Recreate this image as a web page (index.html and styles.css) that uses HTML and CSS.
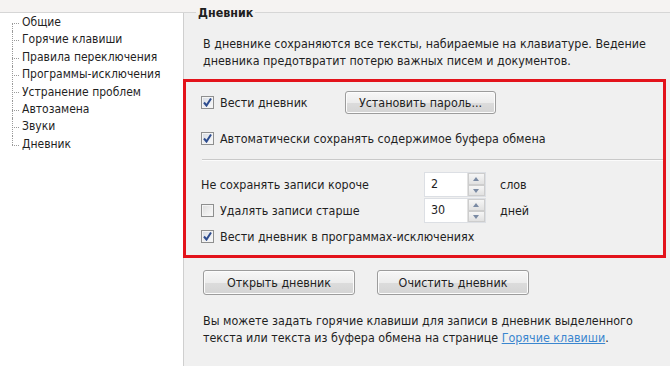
FILE: index.html
```html
<!DOCTYPE html>
<html lang="ru">
<head>
  <meta charset="UTF-8" />
  <meta name="viewport" content="width=device-width, initial-scale=1" />
  <title>Настройки - Дневник</title>
  <link rel="stylesheet" href="styles.css">
</head>
<body>
<div class="top-strip"></div>
<div class="window">
  <aside class="tree" aria-label="Разделы настроек">
    <ul>
      <li>Общие</li>
      <li>Горячие клавиши</li>
      <li>Правила переключения</li>
      <li>Программы-исключения</li>
      <li>Устранение проблем</li>
      <li>Автозамена</li>
      <li>Звуки</li>
      <li class="active">Дневник</li>
    </ul>
  </aside>
  <main class="pane">
    <h1 class="title"><span>Дневник</span></h1>
    <p class="intro">В дневнике сохраняются все тексты, набираемые на клавиатуре. Ведение дневника предотвратит потерю важных писем и документов.</p>

    <section class="highlight">
      <div class="row-first">
        <label class="check first-check"><span class="box checked"></span>Вести дневник</label>
        <button class="btn btn-pass">Установить пароль...</button>
      </div>
      <label class="check clip-check"><span class="box checked"></span>Автоматически сохранять содержимое буфера обмена</label>
      <hr class="sep">
      <div class="limits">
        <span class="limit-label">Не сохранять записи короче</span>
        <div class="spin">
          <span class="spin-value">2</span>
          <span class="spin-btns"><span class="up"></span><span class="down"></span></span>
        </div>
        <span class="unit">слов</span>

        <label class="check limit-label"><span class="box"></span>Удалять записи старше</label>
        <div class="spin">
          <span class="spin-value">30</span>
          <span class="spin-btns"><span class="up"></span><span class="down"></span></span>
        </div>
        <span class="unit">дней</span>
      </div>
      <label class="check excl-check"><span class="box checked"></span>Вести дневник в программах-исключениях</label>
    </section>

    <div class="actions">
      <button class="btn">Открыть дневник</button>
      <button class="btn">Очистить дневник</button>
    </div>
    <p class="note">Вы можете задать горячие клавиши для записи в дневник выделенного текста или текста из буфера обмена на странице <a href="#">Горячие клавиши</a>.</p>
  </main>
</div>
</body>
</html>
```

FILE: styles.css
```css
html, body {
  margin: 0;
  height: 100%;
  overflow: hidden;
}
body {
  font-family: 'DejaVu Sans Condensed', 'DejaVu Sans', sans-serif;
  font-size: 12.4px;
  color: #1f1f1f;
  background: #f0f0f0;
}
.top-strip {
  height: 12px;
  background: #f5f3f2;
}
.window {
  display: flex;
  height: 354px;
  border-top: 1px solid #d6d6d6;
}

/* left tree */
.tree {
  width: 183px;
  flex-shrink: 0;
  background: #fff;
  border-right: 1px solid #cfcfcf;
  font-size: 12px;
}
.tree ul {
  list-style: none;
  margin: 0;
  padding: 1px 0 0 12px;
}
.tree li {
  position: relative;
  line-height: 17.4px;
  padding-left: 10px;
  white-space: nowrap;
}
.tree li::before {
  content: '';
  position: absolute;
  left: 0;
  top: 50%;
  width: 7px;
  border-top: 1px dotted #9a9a9a;
}
.tree li::after {
  content: '';
  position: absolute;
  left: 0;
  top: 0;
  bottom: 0;
  border-left: 1px dotted #9a9a9a;
}
.tree li:first-child::after { top: 50%; }
.tree li:last-child::after { bottom: 50%; }

/* right pane */
.pane {
  flex: 1;
  padding: 0 4px 0 0;
}
.title {
  margin: -7px 0 0 12px;
  font-size: 12.4px;
  line-height: 14px;
  font-weight: bold;
}
.title span {
  padding: 0 2px;
  background: linear-gradient(#f5f3f2 50%, #f0f0f0 50%);
}
.intro {
  margin: 15px 0 0 19px;
  line-height: 17px;
}

.highlight {
  margin: 10px 0 0 -1px;
  border: 3px solid #e3131b;
  padding: 9px 0 10px 15px;
}
.row-first {
  display: flex;
  align-items: center;
  height: 23px;
}
.check {
  display: flex;
  align-items: center;
  gap: 6px;
  line-height: 17px;
}
.first-check {
  width: 144px;
}
.clip-check {
  margin-top: 16px;
}
.box {
  width: 11px;
  height: 11px;
  flex-shrink: 0;
  border: 1px solid #8e8f8f;
  background: linear-gradient(135deg, #dcdcdc, #fbfbfb);
  box-shadow: inset 0 0 0 1px #f4f4f4;
}
.box.checked {
  background:
    url("data:image/svg+xml,%3Csvg xmlns='http://www.w3.org/2000/svg' width='11' height='11'%3E%3Cpath d='M2 5.5 L4.5 8.5 L9 1.5' fill='none' stroke='%232d4c8e' stroke-width='2'/%3E%3C/svg%3E") center no-repeat,
    linear-gradient(135deg, #d6dbe3, #fbfbfb);
}
.sep {
  margin: 12px 0 0 1px;
  border: 0;
  border-top: 1px solid #c9c9c9;
  border-bottom: 1px solid #fbfbfb;
}
.limits {
  margin-top: 11px;
  display: grid;
  grid-template-columns: 209px 62px auto;
  column-gap: 14px;
  row-gap: 1px;
  align-items: center;
}
.spin {
  display: flex;
  height: 25px;
  background: #fff;
  border: 1px solid #dcdfe4;
  box-sizing: border-box;
}
.spin-value {
  flex: 1;
  padding: 3px 6px;
}
.spin-btns {
  width: 17px;
  display: flex;
  flex-direction: column;
  border-left: 1px solid #e2e2e2;
}
.spin-btns span {
  flex: 1;
  background: linear-gradient(#f6f6f6, #e1e1e1);
  border: 1px solid #cdcdcd;
  position: relative;
}
.spin-btns span::after {
  content: '';
  position: absolute;
  left: 4px;
  top: 3px;
  border: 3px solid transparent;
}
.spin-btns .up::after {
  border-bottom: 4px solid #7a8aa3;
  border-top-width: 0;
}
.spin-btns .down::after {
  border-top: 4px solid #7a8aa3;
  border-bottom-width: 0;
}
.unit {
  line-height: 17px;
}
.excl-check {
  margin-top: 5px;
}

.btn {
  font-family: inherit;
  font-size: 12.4px;
  color: #1f1f1f;
  height: 23px;
  border: 1px solid #9c9c9c;
  border-radius: 3px;
  background: linear-gradient(#f7f7f7 0%, #ececec 50%, #dcdcdc 51%, #d4d4d4 100%);
  box-shadow: inset 0 0 0 1px #fcfcfc;
  padding: 0;
  cursor: pointer;
}
.btn-pass {
  width: 151px;
}
.actions {
  margin: 12px 0 0 19px;
  display: flex;
  gap: 22px;
}
.actions .btn {
  width: 152px;
  height: 25px;
}
.note {
  margin: 17px 0 0 19px;
  line-height: 17px;
}
.note a {
  color: #3a86cf;
}
```
